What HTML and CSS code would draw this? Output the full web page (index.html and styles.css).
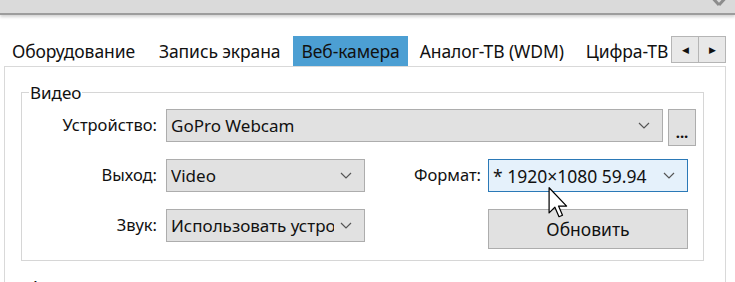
FILE: index.html
```html
<!DOCTYPE html>
<html>
<head>
  <link rel="stylesheet" href="styles.css">
</head>
<body>
  <div class="titlebar">
    <svg class="close-icon" width="24" height="13" viewBox="0 0 24 13">
      <path d="M4 -6 L14 5 M24 -6 L14 5" stroke="#8c8c8c" stroke-width="3" fill="none"/>
    </svg>
  </div>
  <div class="tab-strip">
    <div class="tabs">
      <div class="tab">Оборудование</div>
      <div class="tab">Запись экрана</div>
      <div class="tab active">Веб-камера</div>
      <div class="tab">Аналог-ТВ (WDM)</div>
      <div class="tab">Цифра-ТВ</div>
    </div>
    <div class="spin">
      <div class="spin-btn">&#9664;</div>
      <div class="spin-btn">&#9654;</div>
    </div>
  </div>
  <div class="panel">
    <fieldset class="group">
      <legend>Видео</legend>
      <div class="row row-device">
        <label class="lbl">Устройство:</label>
        <div class="combo combo-wide"><span>GoPro Webcam</span><svg class="chev" width="12" height="8" viewBox="0 0 12 8"><path d="M1 1 L6 6 L11 1" stroke="#555" stroke-width="1.2" fill="none"/></svg></div>
        <button class="dots">...</button>
      </div>
      <div class="row">
        <label class="lbl">Выход:</label>
        <div class="combo"><span>Video</span><svg class="chev" width="12" height="8" viewBox="0 0 12 8"><path d="M1 1 L6 6 L11 1" stroke="#555" stroke-width="1.2" fill="none"/></svg></div>
        <label class="lbl lbl2">Формат:</label>
        <div class="combo combo-focus"><span>* 1920×1080 59.94</span><svg class="chev" width="12" height="8" viewBox="0 0 12 8"><path d="M1 1 L6 6 L11 1" stroke="#555" stroke-width="1.2" fill="none"/></svg>
          <svg class="cursor" width="22" height="32" viewBox="0 0 14 21">
            <path d="M0.5 0.5 L0.5 17 L4.3 13.3 L7 19.5 L9.3 18.5 L6.7 12.5 L12 12.5 Z" fill="#fff" stroke="#000" stroke-width="0.8" stroke-linejoin="round"/>
          </svg>
        </div>
      </div>
      <div class="row">
        <label class="lbl">Звук:</label>
        <div class="combo"><span>Использовать устройство</span><svg class="chev" width="12" height="8" viewBox="0 0 12 8"><path d="M1 1 L6 6 L11 1" stroke="#555" stroke-width="1.2" fill="none"/></svg></div>
        <span class="lbl lbl2"></span>
        <button class="refresh">Обновить</button>
      </div>
    </fieldset>
    <div class="next-title">Аудио</div>
  </div>
</body>
</html>
```
FILE: styles.css
```css
html,
body {
  overflow: hidden;
}
body {
  margin: 0;
  background: #fff;
  font-family: 'Noto Sans', 'Open Sans', sans-serif;
  color: #111;
  width: 735px;
  height: 282px;
}
.titlebar {
  height: 13px;
  background: #dadada;
  border-bottom: 2px solid #9c9c9c;
  box-shadow: 0 2px 3px rgba(0, 0, 0, 0.18);
  display: flex;
  justify-content: flex-end;
  padding-right: 6px;
}
.close-icon {
  display: block;
}
.tab-strip {
  display: flex;
  margin: 21px 9px 0 4px;
  height: 30px;
  align-items: flex-start;
}
.tabs {
  flex: 1;
  display: flex;
  overflow: hidden;
  white-space: nowrap;
  height: 30px;
}
.tab {
  font-size: 17.5px;
  line-height: 30px;
  padding: 0 10px 0 8px;
  color: #111;
  letter-spacing: -0.1px;
}
.tab:nth-child(2) {
  padding-left: 14px;
}
.tab.active {
  background: #4c9fd3;
  padding: 0 8px;
  margin: 0 4px 0 3px;
}
.tab:last-child {
  padding-left: 12px;
}
.spin {
  display: flex;
  height: 27px;
}
.spin-btn {
  width: 26px;
  height: 25px;
  border: 1px solid #b5b5b5;
  background: #e8e8e8;
  font-size: 9px;
  line-height: 25px;
  text-align: center;
  color: #111;
}
.spin-btn + .spin-btn {
  border-left: 0;
}
.panel {
  margin: 0 9px 0 4px;
  border: 1px solid #d9d9d9;
  border-bottom: 0;
  height: 202px;
  padding: 14px 21px 0 16px;
}
.group {
  margin: 0;
  border: 1px solid #d6d6d6;
  padding: 5px 0 11px 0;
}
.group legend {
  font-size: 17px;
  padding: 0 1px;
  margin-left: 7px;
}
.row {
  display: flex;
  align-items: flex-start;
  margin-bottom: 17px;
}
.row:last-child {
  margin-bottom: 0;
}
.row-device {
  margin-bottom: 13px;
}
.lbl {
  width: 135px;
  text-align: right;
  font-size: 16.5px;
  line-height: 32px;
  margin-right: 9px;
  flex: none;
}
.lbl2 {
  width: 116px;
  margin-right: 7px;
}
.combo {
  position: relative;
  box-sizing: border-box;
  width: 199px;
  height: 33px;
  background: #e1e1e1;
  border: 1px solid #adadad;
  display: flex;
  align-items: center;
  padding: 0 12px 0 4px;
  font-size: 17px;
  overflow: hidden;
  flex: none;
}
.combo span {
  flex: 1;
  white-space: nowrap;
  overflow: hidden;
  line-height: 30px;
}
.combo-wide {
  width: 497px;
}
.combo-focus {
  width: 200px;
  background: #e5f1fb;
  border-color: #2b79b7;
  overflow: visible;
  font-size: 17.5px;
}
.chev {
  margin-left: 6px;
  flex: none;
}
.cursor {
  position: absolute;
  left: 59px;
  top: 27px;
}
.dots {
  margin: 0 0 0 5px;
  width: 28px;
  height: 37px;
  background: #e1e1e1;
  border: 1px solid #adadad;
  font-size: 15px;
  font-weight: bold;
  padding: 8px 0 0 0;
  font-family: 'Noto Sans', sans-serif;
  color: #111;
}
.refresh {
  width: 200px;
  height: 40px;
  background: #e1e1e1;
  border: 1px solid #adadad;
  font-family: 'Noto Sans', 'Open Sans', sans-serif;
  font-size: 17.5px;
  color: #111;
  margin: 0;
}
.next-title {
  font-size: 17px;
  line-height: 20px;
  margin: 16px 0 0 9px;
}
```
